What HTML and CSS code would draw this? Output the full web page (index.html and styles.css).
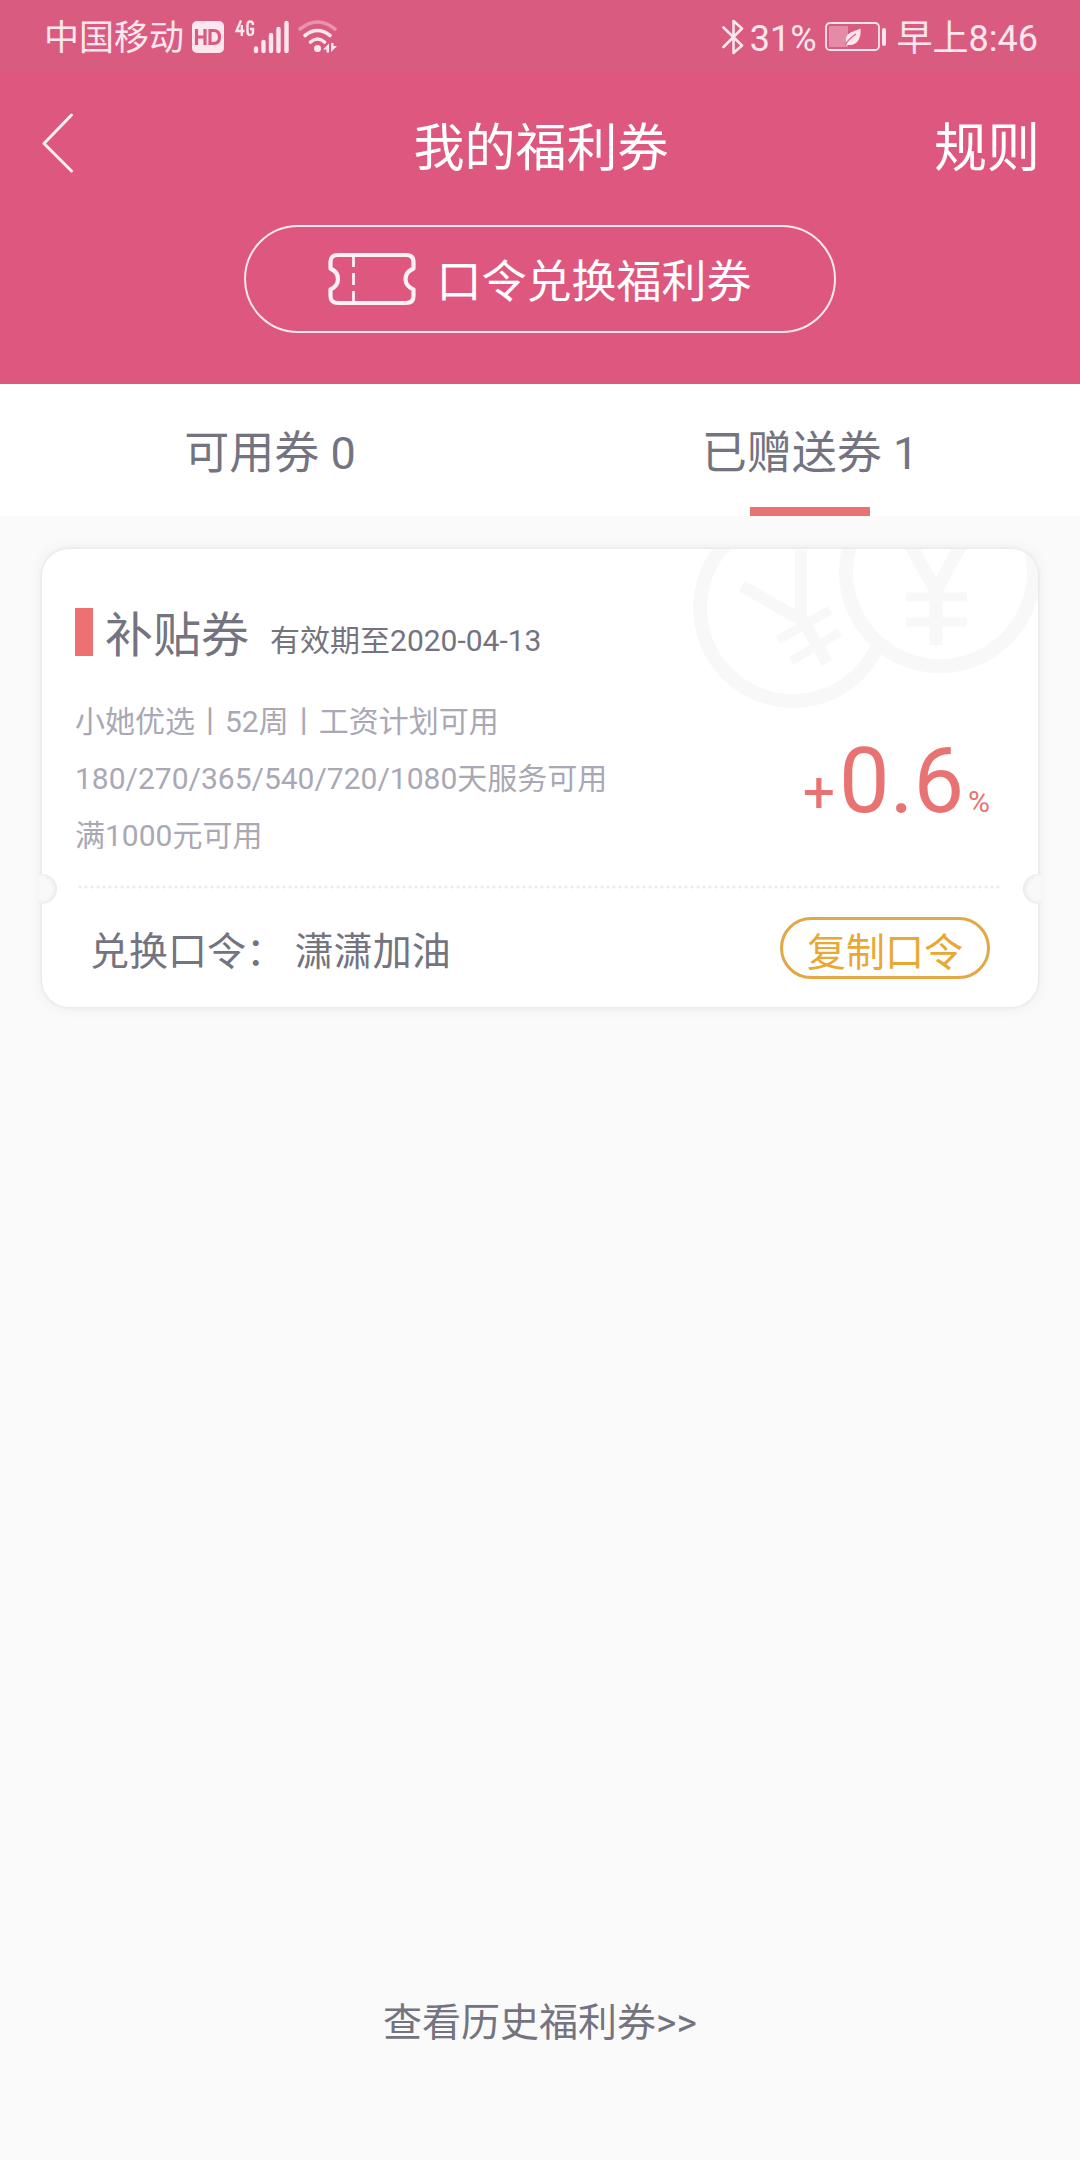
FILE: index.html
```html
<!DOCTYPE html>
<html lang="zh-CN">
<head>
<meta charset="utf-8">
<meta name="viewport" content="width=device-width, initial-scale=1">
<title>我的福利券</title>
<link rel="stylesheet" href="styles.css">
</head>
<body>
<div class="status">
  <div class="status-side">
    <span class="status-carrier">中国移动</span>
    <svg class="status-hd" width="32" height="32" viewBox="0 0 32 32" aria-hidden="true">
      <rect width="32" height="32" rx="5" fill="#fde6ee"/>
      <path d="M4.500 8v16M13 8v16M4.500 16h8.500" fill="none" stroke="#d95c80" stroke-width="3.200"/>
      <path d="M18 9.500v13h3.500q6 0 6-6.500t-6-6.500z" fill="none" stroke="#d95c80" stroke-width="3.200"/>
    </svg>
    <svg class="status-signal" width="54" height="34" viewBox="0 0 54 34" aria-hidden="true">
      <path d="M6 0.500L1.500 11h8M6.800 5v11M18 5q0-3.500-2.700-3.500t-2.800 3.500v6.500q0 3.500 2.800 3.500t2.700-3.500V9h-3" fill="none" stroke="#fde6ee" stroke-width="2.400"/>
      <path d="M21 28.500v2.500M28.500 22v9M36 15v16M43.500 9v22M51.500 3v28" fill="none" stroke="#fde6ee" stroke-width="4.400" stroke-linecap="round"/>
    </svg>
    <svg class="status-wifi" width="40" height="34" viewBox="0 0 40 34" aria-hidden="true">
      <g fill="none" stroke="#fde6ee" stroke-width="3.600" stroke-linecap="round">
        <path d="M2 9Q19.500-5 37 9" opacity=".4"/>
        <path d="M7 15.500q12.500-10 25 0"/>
        <path d="M12.500 22q7-6 14 0"/>
      </g>
      <circle cx="19.500" cy="28.500" r="3.500" fill="#fde6ee"/>
      <path d="M25 29.500l6-6v9h-2.500v-3zM33 23v9l6-6h-3.500v-3z" fill="#fde6ee"/>
    </svg>
  </div>
  <div class="status-side">
    <svg class="status-bt" width="22" height="36" viewBox="0 0 22 36" aria-hidden="true">
      <path d="M1.500 8.500L20 26.500 11.500 34V2L20 9.500 1.500 28" fill="none" stroke="#fde6ee" stroke-width="2.600" stroke-linejoin="round" stroke-linecap="round"/>
    </svg>
    <span>31%</span>
    <svg class="status-battery" width="62" height="30" viewBox="0 0 62 30" aria-hidden="true">
      <rect x="1" y="1" width="53" height="27" rx="4" fill="none" stroke="#fde6ee" stroke-width="1.800"/>
      <rect x="4" y="4" width="19" height="21" rx="1" fill="#e58ba8"/>
      <rect x="57" y="6" width="4" height="18" rx="2" fill="#fde6ee"/>
      <path d="M35.500 6.500c1 9-3 16.500-10.500 16.500-2 0-3.500-.500-4 .500-.500-1 0-2 .500-2.500C18.500 11 28 10 35.500 6.500z" fill="#fde6ee"/>
      <path d="M20.500 23c2-5 6-8 10.500-11" fill="none" stroke="#d95c80" stroke-width="1.200"/>
    </svg>
    <span>早上8:46</span>
  </div>
</div>

<header class="header">
  <nav class="nav">
    <a class="nav-back" href="#back" aria-label="返回">
      <svg width="32" height="60" viewBox="0 0 32 60" aria-hidden="true">
        <path d="M29.500 2L2 30.500 29.500 58" fill="none" stroke="#fff0f5" stroke-width="3" stroke-linecap="round" stroke-linejoin="round"/>
      </svg>
    </a>
    <h1 class="nav-title">我的福利券</h1>
    <a class="nav-rules" href="#rules">规则</a>
  </nav>
  <button class="redeem" type="button">
    <svg width="88" height="54" viewBox="0 0 88 54" aria-hidden="true">
      <path d="M10 3H78Q85.500 3 85.500 10V16.500Q77.500 20 77.500 27T85.500 37.500V44Q85.500 51 78 51H10Q2.500 51 2.500 44V37.500Q10 34 10 27T2.500 16.500V10Q2.500 3 10 3Z" fill="none" stroke="#fff0f5" stroke-width="4.200" stroke-linejoin="round"/>
      <path d="M25.500 4v11M25.500 21v12M25.500 39v11" fill="none" stroke="#fff0f5" stroke-width="2.800"/>
    </svg>
    <span class="redeem-label">口令兑换福利券</span>
  </button>
</header>

<div class="tabs" role="tablist">
  <button class="tab" type="button" role="tab" aria-selected="false">可用券 0</button>
  <button class="tab tab-active" type="button" role="tab" aria-selected="true">已赠送券 1</button>
</div>

<main class="main">
  <article class="coupon">
    <svg class="coupon-coins" width="350" height="162" viewBox="0 0 350 162" aria-hidden="true">
      <g fill="none" stroke="#f8f8f8">
        <circle cx="105" cy="59" r="93" stroke-width="14"/>
        <path d="M54 37L115 72M113 1V72M113 68L139 114" stroke-width="12"/>
        <path d="M90 91L142 61M103 112L152 83" stroke-width="9"/>
        <circle cx="252" cy="23" r="94" fill="#fff" stroke-width="14"/>
        <path d="M219-10L248 42 276-10M248 38V96" stroke-width="13"/>
        <path d="M218 48h61M218 73h61" stroke-width="9"/>
      </g>
    </svg>
    <div class="coupon-head">
      <h2 class="coupon-name">补贴券</h2>
      <span class="coupon-date">有效期至2020-04-13</span>
    </div>
    <div class="coupon-body">
      <ul class="coupon-terms">
        <li>小她优选丨52周丨工资计划可用</li>
        <li>180/270/365/540/720/1080天服务可用</li>
        <li>满1000元可用</li>
      </ul>
      <p class="coupon-rate"><span class="rate-sign">+</span><span class="rate-value">0.6</span><span class="rate-unit">%</span></p>
    </div>
    <div class="coupon-tear">
      <svg width="100%" height="4" aria-hidden="true">
        <line x1="2" y1="2" x2="100%" y2="2" stroke="#ebebeb" stroke-width="3" stroke-linecap="round" stroke-dasharray="0 6"/>
      </svg>
    </div>
    <div class="coupon-foot">
      <p class="coupon-code">兑换口令： 潇潇加油</p>
      <button class="copy" type="button">复制口令</button>
    </div>
  </article>
  <a class="history" href="#history">查看历史福利券&gt;&gt;</a>
</main>
</body>
</html>
```

FILE: styles.css
```css
* {
  box-sizing: border-box;
}

body {
  margin: 0;
  min-height: 100vh;
  display: flex;
  flex-direction: column;
  background: #fafafa;
  color: #747380;
  font-family: Roboto, "Noto Sans CJK SC", sans-serif;
}

h1, h2, p, ul {
  margin: 0;
  padding: 0;
  font-weight: 400;
}

button {
  padding: 0;
  border: 0;
  background: none;
  color: inherit;
  font: inherit;
}

a {
  color: inherit;
  text-decoration: none;
}

svg {
  display: block;
  flex: none;
}

/* Status bar */
.status {
  height: 72px;
  padding: 2px 42px 0 44px;
  display: flex;
  align-items: center;
  justify-content: space-between;
  background: #d95c80;
  color: #fde6ee;
  font-size: 36px;
  line-height: 48px;
}

.status-side {
  display: flex;
  align-items: center;
}

.status-side span {
  padding-top: 4px;
}

.status-carrier { font-size: 35px; }
.status-hd { margin-left: 8px; }
.status-signal { margin-left: 11px; }
.status-wifi { margin-left: 9px; }
.status-bt { margin-right: 6px; }
.status-battery { margin: 0 10px 0 8px; }

/* Header */
.header {
  padding-bottom: 51px;
  display: flex;
  flex-direction: column;
  align-items: center;
  background: #de577f;
  color: #fff;
}

.nav {
  width: 100%;
  height: 142px;
  padding: 0 40px 0 42px;
  display: grid;
  grid-template-columns: 1fr auto 1fr;
  align-items: center;
  line-height: 72px;
}

.nav-title {
  padding-top: 12px;
  font-size: 51px;
}

.nav-rules {
  justify-self: end;
  padding-top: 12px;
  font-size: 53px;
}

.redeem {
  height: 108px;
  margin-top: 11px;
  padding: 0 82px;
  display: flex;
  align-items: center;
  gap: 20px;
  border: 2px solid #ffe9f1;
  border-radius: 54px;
  font-size: 45px;
  line-height: 60px;
}

.redeem-label {
  padding-top: 8px;
}

/* Tabs */
.tabs {
  height: 132px;
  display: flex;
  background: #fff;
}

.tab {
  flex: 1;
  position: relative;
  padding-top: 8px;
  font-size: 45px;
  line-height: 60px;
}

.tab-active::after {
  content: "";
  position: absolute;
  left: 50%;
  bottom: 0;
  width: 120px;
  height: 9px;
  margin-left: -60px;
  background: #e97273;
}

/* Coupon */
.main {
  flex: 1;
  padding: 33px 42px 110px;
  display: flex;
  flex-direction: column;
}

.coupon {
  position: relative;
  padding-top: 47px;
  border-radius: 27px;
  background: #fff;
  box-shadow: 0 0 3px 1px #e6e6e6, 0 0 15px #ededed;
}

.coupon-coins {
  position: absolute;
  top: 0;
  right: 0;
  border-top-right-radius: 27px;
}

.coupon-head {
  position: relative;
  height: 72px;
  padding: 0 33px;
  display: flex;
  align-items: center;
}

.coupon-head::before {
  content: "";
  width: 18px;
  height: 48px;
  margin-right: 12px;
  background: #ed7172;
}

.coupon-name {
  padding-top: 8px;
  font-size: 48px;
  line-height: 60px;
}

.coupon-date {
  margin-left: 21px;
  padding-top: 18px;
  font-size: 30px;
  line-height: 42px;
}

.coupon-body {
  padding: 25px 48px 21px 33px;
  display: flex;
  align-items: center;
  justify-content: space-between;
}

.coupon-terms {
  list-style: none;
  color: #a9a8b4;
  font-size: 30px;
  line-height: 57px;
}

.coupon-rate {
  padding-top: 32px;
  color: #e97273;
  line-height: 90px;
}

.rate-sign { font-size: 57px; }

.rate-value {
  margin: 0 4px;
  font-size: 90px;
}

.rate-unit { font-size: 30px; }

.coupon-tear {
  position: relative;
  padding: 0 36px;
}

.coupon-tear::before,
.coupon-tear::after {
  content: "";
  position: absolute;
  top: -11px;
  width: 19px;
  height: 30px;
  background: #f9f9f9;
}

.coupon-tear::before {
  left: -4px;
  border-radius: 0 15px 15px 0;
  box-shadow: inset -2px 0 4px #e6e6e6;
}

.coupon-tear::after {
  right: -4px;
  border-radius: 15px 0 0 15px;
  box-shadow: inset 2px 0 4px #e6e6e6;
}

.coupon-foot {
  padding: 28px 48px;
  display: flex;
  align-items: center;
  justify-content: space-between;
  font-size: 39px;
  line-height: 54px;
}

.coupon-code {
  padding-top: 8px;
}

.copy {
  height: 62px;
  padding: 6px 24px 0;
  border: 3px solid #e3a846;
  border-radius: 31px;
  color: #e9a834;
}

.history {
  margin-top: auto;
  align-self: center;
  font-size: 39px;
  line-height: 54px;
}
```
